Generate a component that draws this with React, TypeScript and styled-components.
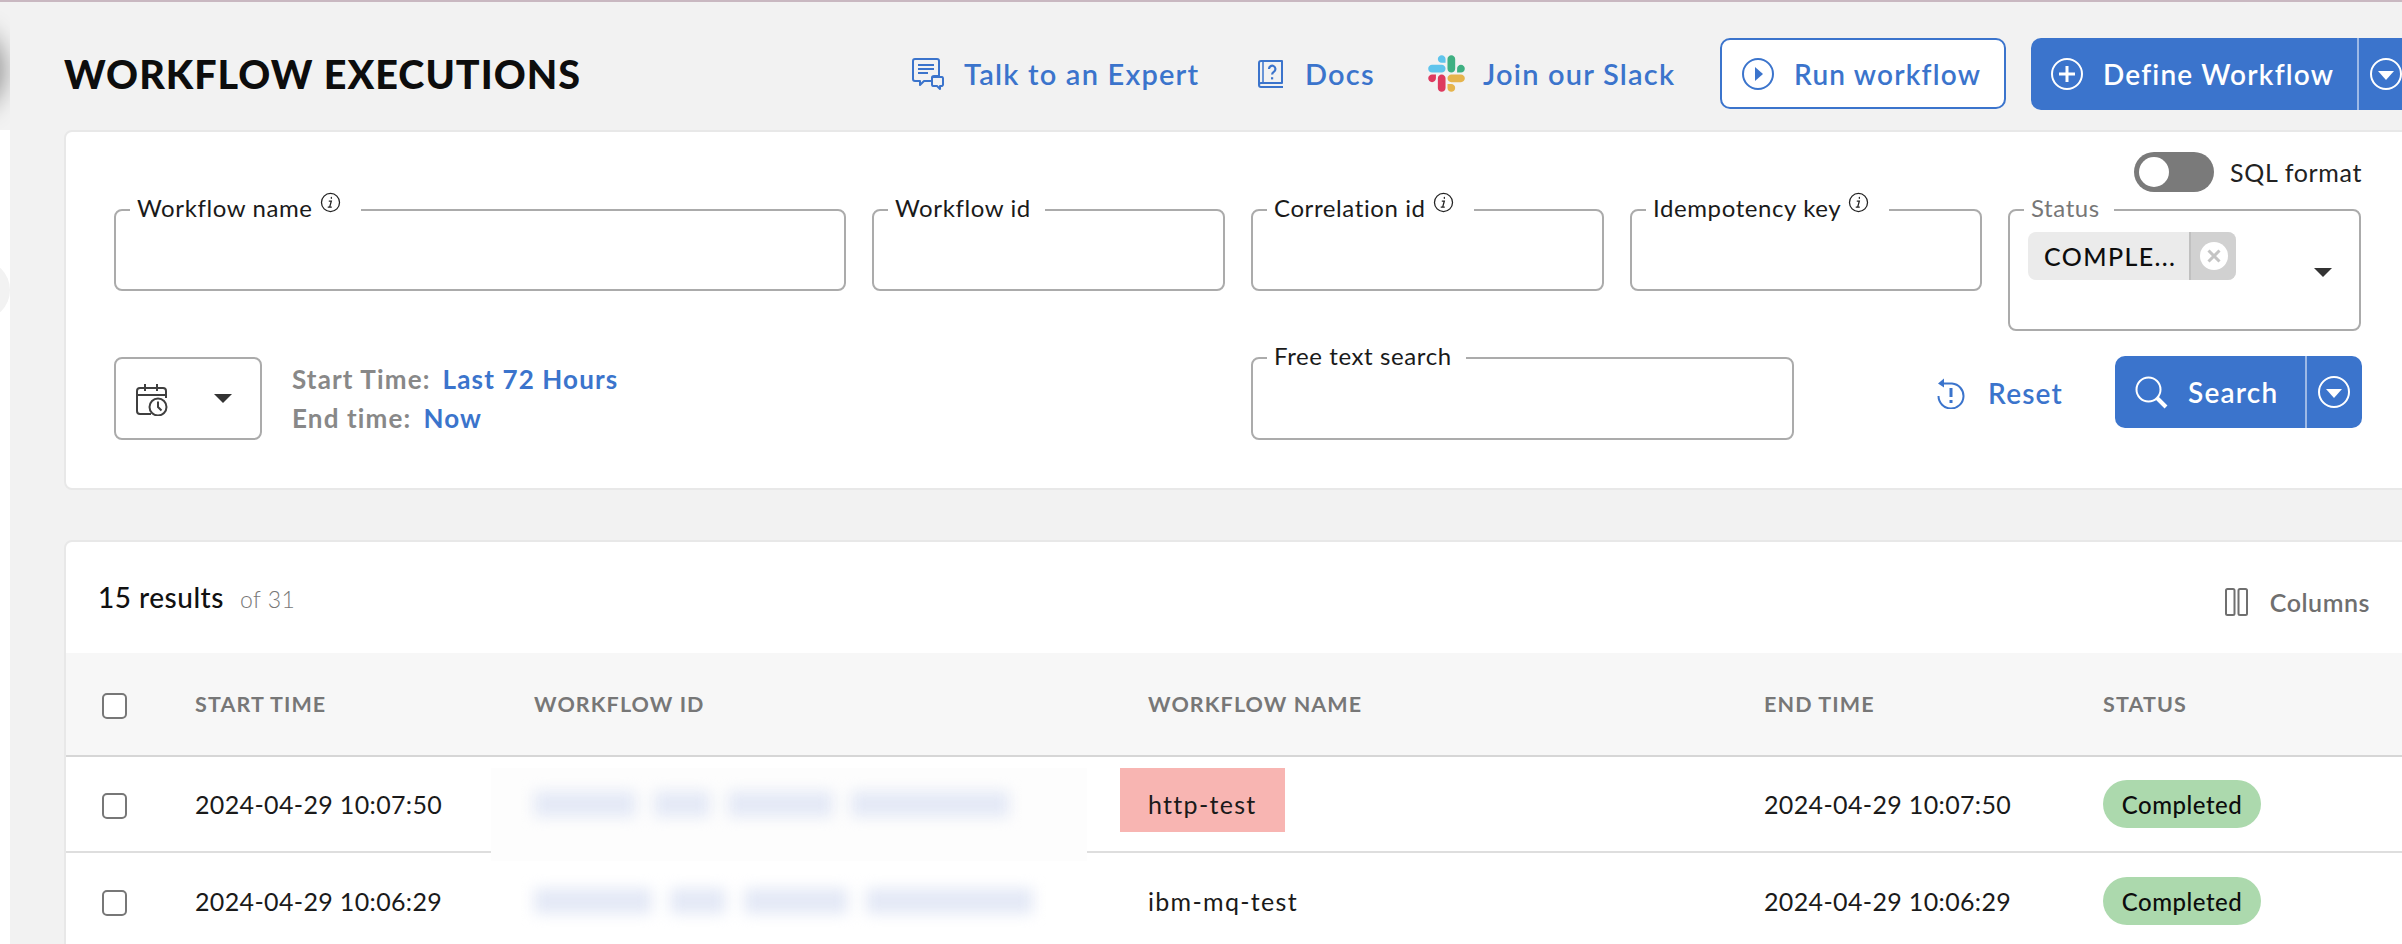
import React from 'react'
import styled, { createGlobalStyle } from 'styled-components'

const BLUE = '#3b74cc'

const GlobalStyle = createGlobalStyle`
  html, body {
    margin: 0;
    height: 944px;
    overflow: hidden;
    background: #f2f2f2;
    font-family: Lato, "Open Sans", sans-serif;
    color: #111;
  }
  * {
    box-sizing: border-box;
  }
`

const TopLine = styled.div`
  height: 2px;
  background: #c9b8c1;
`

const Shell = styled.div`
  display: flex;
  height: 942px;
  overflow: hidden;
`

const Sidebar = styled.div`
  flex: 0 0 10px;
  position: relative;
  overflow: hidden;
  &::before {
    content: '';
    display: block;
    height: 128px;
    background: #f2f2f2;
  }
  &::after {
    content: '';
    display: block;
    height: 814px;
    background: #fff;
  }
`

const SidebarBump = styled.span`
  position: absolute;
  left: -50px;
  top: 258px;
  width: 60px;
  height: 60px;
  border-radius: 50%;
  background: #f2f2f2;
  z-index: 1;
`

const Shadow = styled.span`
  position: absolute;
  left: -62px;
  top: 30px;
  width: 62px;
  height: 72px;
  border-radius: 50%;
  background: #f2f2f2;
  box-shadow: 0 0 26px 4px rgba(0, 0, 0, 0.42);
`

const ShadowClip = styled.div`
  position: absolute;
  left: 0;
  top: 2px;
  width: 40px;
  height: 128px;
  overflow: hidden;
`

const Main = styled.main`
  flex: 1;
  min-width: 0;
  padding-left: 54px;
`

const Header = styled.header`
  display: flex;
  align-items: center;
  height: 128px;
  padding-top: 15px;
`

const Title = styled.h1`
  flex: 0 0 848px;
  margin: 0;
  font-size: 39.500px;
  font-weight: 900;
  letter-spacing: 1px;
  color: #0d0d0d;
`

const HeaderLink = styled.a<{ $width: number }>`
  flex: 0 0 ${({ $width }) => $width}px;
  display: flex;
  align-items: center;
  color: ${BLUE};
  font-size: 29px;
  font-weight: 600;
  letter-spacing: 1.200px;
  svg {
    flex: none;
  }
`

const LinkLabel = styled.span<{ $gap: number }>`
  margin-left: ${({ $gap }) => $gap}px;
`

const RunButton = styled.button`
  flex: 0 0 286px;
  height: 71px;
  margin-right: 25px;
  display: flex;
  align-items: center;
  gap: 20px;
  padding: 0 0 0 20px;
  background: #fff;
  border: 2px solid ${BLUE};
  border-radius: 10px;
  color: ${BLUE};
  font: 600 28px Lato, sans-serif;
  letter-spacing: 1.200px;
`

const SplitButton = styled.div<{ $width: number; $main: number }>`
  flex: 0 0 ${({ $width }) => $width}px;
  height: 72px;
  display: grid;
  grid-template-columns: ${({ $main }) => $main}px 1fr;
  background: ${BLUE};
  border-radius: 10px;
  color: #fff;
  font-size: 28px;
  font-weight: 600;
  letter-spacing: 1.200px;
`

const SplitMain = styled.div<{ $pad: number; $gap: number }>`
  display: flex;
  align-items: center;
  gap: ${({ $gap }) => $gap}px;
  padding-left: ${({ $pad }) => $pad}px;
  border-right: 2px solid #9db9e6;
`

const SplitArrow = styled.div`
  display: flex;
  align-items: center;
  padding-left: 11px;
`

const Panel = styled.section`
  margin: 0 -20px 0 0;
  background: #fff;
  border: 2px solid #e8e8e8;
  border-radius: 8px;
`

const FilterPanel = styled(Panel)`
  height: 360px;
  padding: 20px 0 0 48px;
`

const SqlRow = styled.div`
  height: 40px;
  margin: 0 40px 17px 0;
  display: flex;
  justify-content: flex-end;
  align-items: center;
  gap: 16px;
  padding-right: 18px;
  font-size: 25px;
  letter-spacing: 0.650px;
  color: #222;
`

const Toggle = styled.span`
  width: 80px;
  height: 40px;
  padding: 5px;
  border-radius: 20px;
  background: #7a7a7a;
  &::before {
    content: '';
    display: block;
    width: 30px;
    height: 30px;
    border-radius: 50%;
    background: #fff;
  }
`

const FieldRow = styled.div`
  display: grid;
  grid-template-columns: 732px 353px 353px 352px 353px;
  gap: 26px;
  align-items: start;
  margin-bottom: 26px;
`

const Field = styled.div<{ $height?: number; $width?: number }>`
  position: relative;
  height: ${({ $height }) => $height ?? 82}px;
  ${({ $width }) => ($width ? `flex: 0 0 ${$width}px;` : '')}
  border: 2px solid #ababab;
  border-radius: 8px;
  background: #fff;
`

const FieldLabel = styled.label<{ $muted?: boolean; $info?: boolean }>`
  position: absolute;
  top: -19px;
  left: 14px;
  height: 30px;
  display: flex;
  align-items: center;
  gap: 7px;
  padding: 0 ${({ $info }) => ($info ? 20 : 14)}px 0 7px;
  background: #fff;
  font-size: 24px;
  letter-spacing: 0.600px;
  color: ${({ $muted }) => ($muted ? '#777' : '#1a1a1a')};
  svg {
    margin-top: -10px;
  }
`

const Chip = styled.div`
  position: absolute;
  left: 18px;
  top: 21px;
  width: 208px;
  height: 48px;
  display: grid;
  grid-template-columns: 161px 1fr;
  border-radius: 8px;
  overflow: hidden;
  background: #ebebeb;
  font-size: 25px;
  font-weight: 500;
  letter-spacing: 1.400px;
  color: #0d0d0d;
`

const ChipText = styled.span`
  display: flex;
  align-items: center;
  padding-left: 16px;
`

const ChipClose = styled.span`
  display: flex;
  align-items: center;
  justify-content: center;
  background: #d1d1d1;
  border-left: 2px solid #c0c0c0;
`

const Caret = styled.span<{ $color?: string }>`
  display: block;
  width: 0;
  height: 0;
  border-left: 9px solid transparent;
  border-right: 9px solid transparent;
  border-top: 9px solid ${({ $color }) => $color ?? '#333'};
`

const StatusCaret = styled(Caret)`
  position: absolute;
  right: 27px;
  top: 57px;
`

const SearchRow = styled.div`
  display: flex;
  align-items: flex-start;
  width: 2248px;
`

const DateGroup = styled.div`
  flex: 0 0 1137px;
  display: flex;
  align-items: center;
  gap: 30px;
`

const DateBox = styled.div`
  flex: 0 0 148px;
  height: 83px;
  display: flex;
  align-items: center;
  gap: 46px;
  padding-left: 20px;
  border: 2px solid #ababab;
  border-radius: 8px;
  svg {
    margin-top: 2px;
  }
`

const DateLines = styled.div`
  display: grid;
  row-gap: 9px;
  font-size: 26px;
  font-weight: 700;
  letter-spacing: 1.150px;
  line-height: 30px;
  color: #888;
`

const DateValue = styled.span`
  margin-left: 12px;
  color: ${BLUE};
`

const ResetLink = styled.a`
  margin: 19px 52px 0 auto;
  display: flex;
  align-items: center;
  gap: 23px;
  color: ${BLUE};
  font-size: 28px;
  font-weight: 600;
  letter-spacing: 1.200px;
`

const SearchWrap = styled.div`
  margin-top: -1px;
  display: flex;
`

const TablePanel = styled(Panel)`
  margin-top: 50px;
  height: 500px;
`

const Toolbar = styled.div`
  height: 111px;
  display: flex;
  align-items: center;
  justify-content: space-between;
  padding: 0 50px 0 32px;
`

const Results = styled.div`
  display: flex;
  align-items: baseline;
  gap: 16px;
  font-size: 28px;
  font-weight: 500;
  letter-spacing: 0.500px;
  color: #111;
  margin-top: -2px;
`

const Total = styled.span`
  font-size: 23px;
  font-weight: 300;
  color: #777;
`

const ColumnsButton = styled.div`
  display: flex;
  align-items: center;
  gap: 22px;
  font-size: 25px;
  font-weight: 600;
  letter-spacing: 0.550px;
  color: #6f6f6f;
  margin-top: 8px;
`

const GRID = '129px 339px 614px 616px 339px 1fr'

const HeadRow = styled.div`
  height: 104px;
  display: grid;
  grid-template-columns: ${GRID};
  align-items: center;
  background: #f7f7f7;
  border-bottom: 2px solid #d6d6d6;
  font-size: 21.500px;
  font-weight: 700;
  letter-spacing: 1.100px;
  color: #777;
  text-transform: uppercase;
`

const Row = styled.div<{ $last?: boolean }>`
  height: 96px;
  display: grid;
  grid-template-columns: ${GRID};
  align-items: center;
  border-bottom: ${({ $last }) => ($last ? 'none' : '2px solid #dedede')};
  font-size: 25px;
  letter-spacing: 0.350px;
  color: #1a1a1a;
`

const CheckCell = styled.div`
  padding-left: 36px;
`

const CheckBox = styled.span`
  display: block;
  width: 25px;
  height: 26px;
  margin-top: 4px;
  border: 2px solid #777;
  border-radius: 5px;
  background: #fff;
`

const IdCell = styled.div`
  position: relative;
  height: 100%;
  display: flex;
  align-items: center;
`

// the id was blurred out in the screenshot, with a paler patch pasted over the row line
const RedactPatch = styled.span`
  position: absolute;
  left: -43px;
  top: 11px;
  width: 596px;
  height: 93px;
  background: #fdfdfd;
`

const BlurredId = styled.div`
  position: relative;
  display: flex;
  gap: 18px;
  filter: blur(7px);
`

const BlurChunk = styled.span<{ $width: number }>`
  display: block;
  width: ${({ $width }) => $width}px;
  height: 26px;
  background: #e4e9f6;
`

const NameCell = styled.div`
  display: flex;
  align-items: center;
  letter-spacing: 1.300px;
`

const Highlight = styled.span`
  display: inline-flex;
  align-items: center;
  height: 64px;
  margin: 0 0 8px -28px;
  padding: 8px 28px 0 28px;
  background: #f8b5b2;
`

const StatusBadge = styled.span`
  display: inline-flex;
  align-items: center;
  justify-content: center;
  width: 158px;
  height: 48px;
  border-radius: 24px;
  background: #acd9ad;
  font-size: 24px;
  font-weight: 500;
  letter-spacing: 0.500px;
  color: #0d0d0d;
`

const Info = () => (
  <svg width="21" height="21" viewBox="0 0 20 20" fill="none" stroke="#222" strokeWidth="1.200">
    <circle cx="10" cy="10" r="8.600" />
    <path d="M10.800 5.200v.8M8.800 8.600h2l-1.600 5.800h-1.400m1.400 0h1.600" strokeLinecap="round" />
  </svg>
)

const TalkIcon = () => (
  <svg width="32" height="32" viewBox="0 0 32 32" fill="none" stroke={BLUE} strokeWidth="2">
    <path d="M3 1h22a2 2 0 0 1 2 2v15h-5a2 2 0 0 0-2 2v3h-8l-4 4v-4H3a2 2 0 0 1-2-2V3a2 2 0 0 1 2-2z" strokeLinejoin="round" />
    <path d="M6 7h16M6 11h16M6 15h10" />
    <path d="M21 19h9a1.500 1.500 0 0 1 1 1.500v6a1.500 1.500 0 0 1-1 1.500h-2v3l-3-3h-4a1.500 1.500 0 0 1-1-1.500v-6a1.500 1.500 0 0 1 1-1.500z" strokeLinejoin="round" />
  </svg>
)

const DocsIcon = () => (
  <svg width="26" height="28" viewBox="0 0 26 28" fill="none" stroke={BLUE} strokeWidth="2">
    <path d="M1 25V3a2 2 0 0 1 2-2h21v22H3a2 2 0 0 0 0 4h22" strokeLinejoin="round" />
    <path d="M5 1v21" strokeWidth="1.500" />
    <path d="M11 9a3.200 3.200 0 1 1 5 2.600c-1.300.8-1.900 1.400-1.900 3" strokeWidth="2.200" />
    <path d="M14.100 17.200v2.200" strokeWidth="2.200" />
  </svg>
)

const SlackIcon = () => (
  <svg width="37" height="37" viewBox="0 0 127 127">
    <path d="M27.200 80c0 7.300-5.900 13.200-13.200 13.200C6.700 93.200.8 87.300.8 80c0-7.300 5.900-13.200 13.200-13.200h13.200V80zm6.600 0c0-7.300 5.900-13.200 13.200-13.200 7.300 0 13.200 5.900 13.200 13.200v33c0 7.300-5.900 13.200-13.200 13.200-7.300 0-13.200-5.900-13.200-13.200V80z" fill="#de3a5f" />
    <path d="M47 27c-7.300 0-13.200-5.900-13.200-13.200C33.800 6.500 39.700.6 47 .6c7.300 0 13.200 5.900 13.200 13.200V27H47zm0 6.700c7.300 0 13.200 5.900 13.200 13.200 0 7.300-5.900 13.200-13.200 13.200H13.900C6.600 60.100.7 54.200.7 46.900c0-7.300 5.900-13.200 13.200-13.200H47z" fill="#5fc4ec" />
    <path d="M99.900 46.900c0-7.300 5.900-13.200 13.200-13.200 7.300 0 13.200 5.900 13.200 13.200 0 7.300-5.900 13.200-13.200 13.200H99.900V46.900zm-6.600 0c0 7.300-5.900 13.200-13.200 13.200-7.300 0-13.200-5.900-13.200-13.200V13.800C66.900 6.500 72.800.6 80.100.6c7.300 0 13.200 5.900 13.200 13.200v33.100z" fill="#3fb082" />
    <path d="M80.100 99.800c7.300 0 13.200 5.900 13.200 13.200 0 7.300-5.900 13.200-13.200 13.200-7.300 0-13.200-5.900-13.200-13.200V99.800h13.200zm0-6.600c-7.300 0-13.200-5.900-13.200-13.200 0-7.300 5.900-13.200 13.200-13.200h33.100c7.300 0 13.200 5.900 13.200 13.200 0 7.300-5.900 13.200-13.200 13.200H80.100z" fill="#e6b44c" />
  </svg>
)

const PlayCircle = () => (
  <svg width="32" height="32" viewBox="0 0 32 32" fill="none">
    <circle cx="16" cy="16" r="15" stroke={BLUE} strokeWidth="2" />
    <path d="M13 9l8 7-8 7z" fill={BLUE} />
  </svg>
)

const PlusCircle = () => (
  <svg width="32" height="32" viewBox="0 0 32 32" fill="none" stroke="#fff" strokeWidth="2">
    <circle cx="16" cy="16" r="15" />
    <path d="M16 8v16M8 16h16" strokeWidth="3" />
  </svg>
)

const DownCircle = () => (
  <svg width="32" height="32" viewBox="0 0 32 32" fill="none">
    <circle cx="16" cy="16" r="15" stroke="#fff" strokeWidth="2" />
    <path d="M8 13h16l-8 9z" fill="#fff" />
  </svg>
)

const SearchIcon = () => (
  <svg width="33" height="33" viewBox="0 0 33 33" fill="none" stroke="#fff">
    <circle cx="13.500" cy="13.500" r="12" strokeWidth="2" />
    <path d="M22 22l9 9" strokeWidth="4" />
  </svg>
)

const ResetIcon = () => (
  <svg width="28" height="32" viewBox="0 0 28 32" fill="none" stroke={BLUE} strokeWidth="2">
    <path d="M6 6.500h9a12.500 12.500 0 1 1-13.500 12.500" />
    <path d="M7 1.500L1 6.500l6 4z" fill={BLUE} stroke="none" />
    <path d="M14 11v9M14 23v3" strokeWidth="3" />
  </svg>
)

const ColumnsIcon = () => (
  <svg width="23" height="28" viewBox="0 0 23 28" fill="none" stroke="#6f6f6f" strokeWidth="2">
    <rect x="1" y="1" width="8.500" height="26" rx="1.500" />
    <rect x="13.500" y="1" width="8.500" height="26" rx="1.500" />
  </svg>
)

const CalendarIcon = () => (
  <svg width="32" height="33" viewBox="0 0 32 33" fill="none" stroke="#3f3f3f" strokeWidth="2">
    <path d="M15 31H4a3 3 0 0 1-3-3V8a3 3 0 0 1 3-3h23a3 3 0 0 1 3 3v7M1 12h29M9 1v7M21 1v7" />
    <circle cx="22" cy="24" r="8.500" fill="#fff" />
    <path d="M22 18.500V24l3.500 3.500" />
  </svg>
)

const CloseDot = () => (
  <svg width="28" height="28" viewBox="0 0 28 28" fill="none">
    <circle cx="14" cy="14" r="14" fill="#fff" />
    <path d="M8.500 8.500l11 11M19.500 8.500l-11 11" stroke="#c4c4c4" strokeWidth="3" />
  </svg>
)

const rows = [
  { start: '2024-04-29 10:07:50', name: 'http-test', chunks: [102, 56, 105, 158], marked: true },
  { start: '2024-04-29 10:06:29', name: 'ibm-mq-test', chunks: [118, 56, 104, 167] },
]

export default function App() {
  return (
    <>
      <GlobalStyle />
      <TopLine />
      <Shell>
        <Sidebar>
          <ShadowClip>
            <Shadow />
          </ShadowClip>
          <SidebarBump />
        </Sidebar>
        <Main>
          <Header>
            <Title>WORKFLOW EXECUTIONS</Title>
            <HeaderLink $width={346}>
              <TalkIcon />
              <LinkLabel $gap={20}>Talk to an Expert</LinkLabel>
            </HeaderLink>
            <HeaderLink $width={170}>
              <DocsIcon />
              <LinkLabel $gap={21}>Docs</LinkLabel>
            </HeaderLink>
            <HeaderLink $width={292}>
              <SlackIcon />
              <LinkLabel $gap={18}>Join our Slack</LinkLabel>
            </HeaderLink>
            <RunButton>
              <PlayCircle />
              Run workflow
            </RunButton>
            <SplitButton $width={380} $main={328}>
              <SplitMain $pad={20} $gap={20}>
                <PlusCircle />
                Define Workflow
              </SplitMain>
              <SplitArrow>
                <DownCircle />
              </SplitArrow>
            </SplitButton>
          </Header>

          <FilterPanel>
            <SqlRow>
              <Toggle />
              SQL format
            </SqlRow>
            <FieldRow>
              <Field>
                <FieldLabel $info>
                  Workflow name
                  <Info />
                </FieldLabel>
              </Field>
              <Field>
                <FieldLabel>Workflow id</FieldLabel>
              </Field>
              <Field>
                <FieldLabel $info>
                  Correlation id
                  <Info />
                </FieldLabel>
              </Field>
              <Field>
                <FieldLabel $info>
                  Idempotency key
                  <Info />
                </FieldLabel>
              </Field>
              <Field $height={122}>
                <FieldLabel $muted>Status</FieldLabel>
                <Chip>
                  <ChipText>COMPLE...</ChipText>
                  <ChipClose>
                    <CloseDot />
                  </ChipClose>
                </Chip>
                <StatusCaret />
              </Field>
            </FieldRow>
            <SearchRow>
              <DateGroup>
                <DateBox>
                  <CalendarIcon />
                  <Caret />
                </DateBox>
                <DateLines>
                  <div>
                    Start Time:<DateValue>Last 72 Hours</DateValue>
                  </div>
                  <div>
                    End time:<DateValue>Now</DateValue>
                  </div>
                </DateLines>
              </DateGroup>
              <Field $width={543} $height={83}>
                <FieldLabel>Free text search</FieldLabel>
              </Field>
              <ResetLink>
                <ResetIcon />
                Reset
              </ResetLink>
              <SearchWrap>
                <SplitButton $width={247} $main={192}>
                  <SplitMain $pad={20} $gap={20}>
                    <SearchIcon />
                    Search
                  </SplitMain>
                  <SplitArrow>
                    <DownCircle />
                  </SplitArrow>
                </SplitButton>
              </SearchWrap>
            </SearchRow>
          </FilterPanel>

          <TablePanel>
            <Toolbar>
              <Results>
                15 results
                <Total>of 31</Total>
              </Results>
              <ColumnsButton>
                <ColumnsIcon />
                Columns
              </ColumnsButton>
            </Toolbar>
            <HeadRow>
              <CheckCell>
                <CheckBox />
              </CheckCell>
              <div>Start Time</div>
              <div>Workflow ID</div>
              <div>Workflow Name</div>
              <div>End Time</div>
              <div>Status</div>
            </HeadRow>
            {rows.map((row, i) => (
              <Row key={row.start} $last={i === rows.length - 1}>
                <CheckCell>
                  <CheckBox />
                </CheckCell>
                <div>{row.start}</div>
                <IdCell>
                  {row.marked && <RedactPatch />}
                  <BlurredId>
                    {row.chunks.map((w, j) => (
                      <BlurChunk key={j} $width={w} />
                    ))}
                  </BlurredId>
                </IdCell>
                <NameCell>{row.marked ? <Highlight>{row.name}</Highlight> : row.name}</NameCell>
                <div>{row.start}</div>
                <div>
                  <StatusBadge>Completed</StatusBadge>
                </div>
              </Row>
            ))}
          </TablePanel>
        </Main>
      </Shell>
    </>
  )
}
